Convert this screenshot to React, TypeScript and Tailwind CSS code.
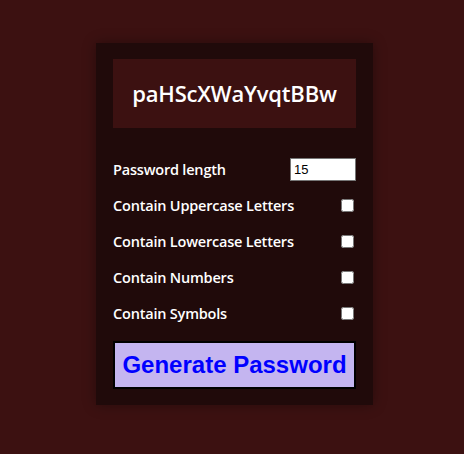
import React from "react";

const rows = [
  "Contain Uppercase Letters",
  "Contain Lowercase Letters",
  "Contain Numbers",
  "Contain Symbols",
];

export default function App() {
  return (
    <div className="min-h-[454px] w-full bg-[#3c1111] flex justify-center pt-[43px] pl-[5px]" style={{ fontFamily: '"Open Sans", "Noto Sans", sans-serif' }}>
      <div className="w-[277px] h-[362px] bg-[#200a0a] px-[17px] pt-[16px] pb-[16px] shadow-[0_0_12px_rgba(0,0,0,0.35)] flex flex-col">
        <div className="h-[69px] bg-[#3c1111] flex items-center justify-center text-white text-[22px] font-semibold tracking-[-0.2px]">
          paHScXWaYvqtBBw
        </div>
        <div className="mt-[23px] flex flex-col">
          <div className="h-[36px] flex items-center justify-between pt-[1px]">
            <span className="text-white text-[14.5px] font-semibold tracking-[-0.2px]">Password length</span>
            <input
              type="number"
              defaultValue={15}
              className="w-[66px] h-[23px] bg-white border border-[#767676] px-[3px] text-[13px] text-black outline-none"
              style={{ fontFamily: '"Liberation Sans", Arial, sans-serif' }}
            />
          </div>
          {rows.map((r) => (
            <div key={r} className="h-[36px] flex items-center justify-between pt-[1px]">
              <span className="text-white text-[14.5px] font-semibold tracking-[-0.2px]">{r}</span>
              <input type="checkbox" className="w-[13px] h-[13px] mr-[2px]" />
            </div>
          ))}
        </div>
        <button
          className="mt-[10px] h-[48px] w-full bg-[#c4b5f0] border-2 border-black text-[#0000ff] text-[24px] font-bold"
          style={{ fontFamily: '"Liberation Sans", Arial, sans-serif' }}
        >
          Generate Password
        </button>
      </div>
    </div>
  );
}
